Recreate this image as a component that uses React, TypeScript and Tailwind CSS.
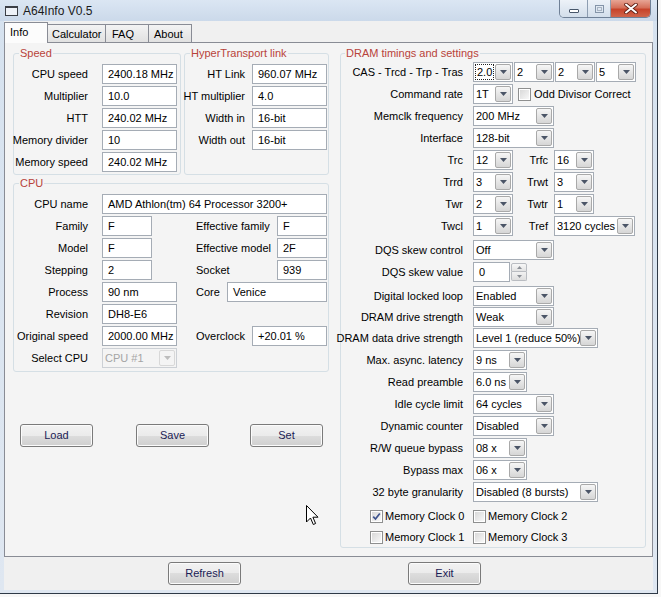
import React from "react";

const Arrow = ({ c = "#4b5567" }: { c?: string }) => (
  <svg width="7" height="4" viewBox="0 0 7 4">
    <path d="M0 0H7L3.5 4Z" fill={c} />
  </svg>
);

function TextBox({ value, className = "" }: { value: string; className?: string }) {
  return (
    <div
      className={`h-[20px] shrink-0 border border-[#a5acb5] bg-white pl-[5px] flex items-center whitespace-nowrap overflow-hidden text-black ${className}`}
    >
      {value}
    </div>
  );
}

function Combo({
  value,
  className = "",
  focus = false,
  disabled = false,
}: {
  value: string;
  className?: string;
  focus?: boolean;
  disabled?: boolean;
}) {
  return (
    <div
      className={`h-[20px] shrink-0 flex border ${
        disabled ? "border-[#ccd0d5] bg-[#f4f4f4] text-[#a5a5a5]" : "border-[#a5acb5] bg-white text-black"
      } ${className}`}
    >
      {focus ? (
        <div className="flex-1 min-w-0 m-[1px] border border-dotted border-[#222] flex items-center pl-[1px] overflow-hidden whitespace-nowrap">
          {value}
        </div>
      ) : (
        <div className="flex-1 min-w-0 flex items-center pl-[2px] overflow-hidden whitespace-nowrap">{value}</div>
      )}
      <div
        className={`w-[16px] shrink-0 my-[1px] mr-[1px] border rounded-[2px] flex items-center justify-center ${
          disabled
            ? "border-[#d8d8d8] bg-[#f4f4f4]"
            : "border-[#a9a9a9] bg-gradient-to-b from-[#f6f6f6] to-[#d6d6d6]"
        }`}
      >
        <Arrow c={disabled ? "#bdbdbd" : "#4b5567"} />
      </div>
    </div>
  );
}

function Check({ checked = false }: { checked?: boolean }) {
  return (
    <div className="w-[13px] h-[13px] shrink-0 border border-[#8e8f8f] bg-white p-[1px]">
      <div className="w-full h-full bg-gradient-to-br from-[#d9d9d9] to-[#f8f8f8] flex items-center justify-center">
        {checked && (
          <svg width="9" height="9" viewBox="0 0 9 9">
            <path d="M1.2 4.6 L3.5 7 L7.8 1.5" stroke="#3e538d" strokeWidth="1.7" fill="none" />
          </svg>
        )}
      </div>
    </div>
  );
}

function Btn({ label, className = "" }: { label: string; className?: string }) {
  return (
    <div
      className={`w-[73px] h-[23px] shrink-0 rounded-[3px] border border-[#7a7a7a] bg-[linear-gradient(#f2f2f2,#ebebeb_50%,#dddddd_50%,#cfcfcf)] shadow-[inset_0_0_0_1px_#fbfbfb] flex items-center justify-center text-[#1b1b55] ${className}`}
    >
      {label}
    </div>
  );
}

function SRow({ label, value }: { label: string; value: string }) {
  return (
    <div className="flex items-center h-[20px]">
      <div className="w-[74px] shrink-0 flex justify-end whitespace-nowrap">{label}</div>
      <TextBox className="ml-[14px] w-[75px]" value={value} />
    </div>
  );
}

function HRow({ label, value }: { label: string; value: string }) {
  return (
    <div className="flex items-center h-[20px]">
      <div className="w-[60px] shrink-0 flex justify-end whitespace-nowrap">{label}</div>
      <TextBox className="ml-[7px] w-[75px]" value={value} />
    </div>
  );
}

function CLabel({ label }: { label: string }) {
  return <div className="w-[74px] shrink-0 flex justify-end whitespace-nowrap">{label}</div>;
}

function DRow({
  label,
  children,
  className = "",
}: {
  label: string;
  children: React.ReactNode;
  className?: string;
}) {
  return (
    <div className={`flex items-center h-[20px] ${className}`}>
      <div className="w-[122px] shrink-0 flex justify-end whitespace-nowrap">{label}</div>
      <div className="ml-[10px] flex items-center">{children}</div>
    </div>
  );
}

function Pair({
  a,
  label,
  b,
  bw = "w-[40px]",
}: {
  a: string;
  label: string;
  b: string;
  bw?: string;
}) {
  return (
    <>
      <Combo value={a} className="w-[40px]" />
      <div className="w-[35px] shrink-0 flex justify-end whitespace-nowrap">{label}</div>
      <Combo value={b} className={`ml-[6px] ${bw}`} />
    </>
  );
}

const legend = "ml-[5px] px-[1px] text-[#b8433a] leading-[13px]";
const fs = "border border-[#d5dfe5] rounded-[3px]";

export default function App() {
  return (
    <div className="relative w-[661px] h-[597px] overflow-hidden bg-[#f7f7f7] font-['Liberation_Sans',Arial,sans-serif] text-[11px] leading-[13px] text-black">
      <div className="w-[658px] h-[594px] flex flex-col bg-gradient-to-b from-[#d6e2ef] to-[#dfe7f1] border-r border-b border-[#2e3946]">
        {/* Title bar */}
        <div className="h-[21px] shrink-0 flex items-start bg-gradient-to-b from-[#dbe6f3] to-[#cbd9ea]">
          <div className="ml-[5px] mt-[6px] w-[13px] h-[10px] border border-[#3b3f46] border-t-[2px] bg-[#eef2f8]" />
          <div className="ml-[5px] mt-[4px] text-[12px] leading-[14px] text-[#1a1a1a]">A64Info V0.5</div>
          <div className="ml-auto mr-[6px] flex h-[18px] rounded-b-[5px] border border-t-0 border-[#6f8096] overflow-hidden">
            <div className="w-[28px] h-full bg-gradient-to-b from-[#edf2f8] to-[#d3deeb] border-r border-[#8d9db1] flex items-center justify-center">
              <div className="mt-[5px] w-[10px] h-[4px] rounded-[1px] border border-[#47566a] bg-white" />
            </div>
            <div className="w-[23px] h-full bg-gradient-to-b from-[#edf2f8] to-[#d3deeb] border-r border-[#8d9db1] flex items-center justify-center">
              <div className="w-[9px] h-[8px] border border-[#8494a8] p-[1px]">
                <div className="w-full h-full border border-[#a8b4c3]" />
              </div>
            </div>
            <div className="w-[39px] h-full bg-[linear-gradient(#e7a595,#d5705a_45%,#c7432a_55%,#d0664c)] flex items-center justify-center">
              <svg width="14" height="11" viewBox="0 0 14 11">
                <path d="M2 1.5 L12 9.5 M12 1.5 L2 9.5" stroke="#5e1f14" strokeWidth="3.6" strokeLinecap="round" />
                <path d="M2 1.5 L12 9.5 M12 1.5 L2 9.5" stroke="#ffffff" strokeWidth="2" strokeLinecap="round" />
              </svg>
            </div>
          </div>
        </div>

        {/* Client area */}
        <div className="flex-1 mx-[4px] mb-[3px] bg-[#f0f0f0] flex flex-col">
          {/* Tabs */}
          <div className="h-[21px] shrink-0 flex items-end">
            <div className="relative z-10 -mb-[1px] w-[44px] h-[21px] bg-[#fcfcfc] border-l border-t border-r border-[#898c95] pl-[5px] pt-[3px]">
              Info
            </div>
            <div className="w-[58px] h-[18px] bg-gradient-to-b from-[#f3f3f3] to-[#e1e1e1] border-t border-r border-[#898c95] pl-[4px] pt-[3px]">
              Calculator
            </div>
            <div className="w-[43px] h-[18px] bg-gradient-to-b from-[#f3f3f3] to-[#e1e1e1] border-t border-r border-[#898c95] pl-[6px] pt-[3px]">
              FAQ
            </div>
            <div className="w-[43px] h-[18px] bg-gradient-to-b from-[#f3f3f3] to-[#e1e1e1] border-t border-r border-[#898c95] pl-[5px] pt-[3px]">
              About
            </div>
          </div>

          {/* Panel */}
          <div className="h-[515px] shrink-0 border border-[#898c95] bg-[#f4f4f4] flex pt-[4px] pl-[8px]">
            {/* Left column */}
            <div className="w-[316px] shrink-0 flex flex-col">
              <div className="flex gap-[3px]">
                <fieldset className={`w-[168px] pb-[2px] ${fs}`}>
                  <legend className={legend}>Speed</legend>
                  <div className="flex flex-col gap-[2px] pt-[4px]">
                    <SRow label="CPU speed" value="2400.18 MHz" />
                    <SRow label="Multiplier" value="10.0" />
                    <SRow label="HTT" value="240.02 MHz" />
                    <SRow label="Memory divider" value="10" />
                    <SRow label="Memory speed" value="240.02 MHz" />
                  </div>
                </fieldset>
                <fieldset className={`w-[145px] pb-[2px] ${fs}`}>
                  <legend className={legend}>HyperTransport link</legend>
                  <div className="flex flex-col gap-[2px] pt-[4px]">
                    <HRow label="HT Link" value="960.07 MHz" />
                    <HRow label="HT multiplier" value="4.0" />
                    <HRow label="Width in" value="16-bit" />
                    <HRow label="Width out" value="16-bit" />
                  </div>
                </fieldset>
              </div>

              <fieldset className={`mt-[2px] w-[316px] pb-[3px] ${fs}`}>
                <legend className={legend}>CPU</legend>
                <div className="flex flex-col gap-[2px] pt-[4px] pr-[1px]">
                  <div className="flex items-center h-[20px]">
                    <CLabel label="CPU name" />
                    <TextBox className="ml-[14px] w-[225px]" value="AMD Athlon(tm) 64 Processor 3200+" />
                  </div>
                  <div className="flex items-center h-[20px]">
                    <CLabel label="Family" />
                    <TextBox className="ml-[14px] w-[50px]" value="F" />
                    <div className="ml-[44px] flex-1 whitespace-nowrap">Effective family</div>
                    <TextBox className="w-[50px]" value="F" />
                  </div>
                  <div className="flex items-center h-[20px]">
                    <CLabel label="Model" />
                    <TextBox className="ml-[14px] w-[50px]" value="F" />
                    <div className="ml-[44px] flex-1 whitespace-nowrap">Effective model</div>
                    <TextBox className="w-[50px]" value="2F" />
                  </div>
                  <div className="flex items-center h-[20px]">
                    <CLabel label="Stepping" />
                    <TextBox className="ml-[14px] w-[50px]" value="2" />
                    <div className="ml-[44px] flex-1 whitespace-nowrap">Socket</div>
                    <TextBox className="w-[50px]" value="939" />
                  </div>
                  <div className="flex items-center h-[20px]">
                    <CLabel label="Process" />
                    <TextBox className="ml-[14px] w-[75px]" value="90 nm" />
                    <div className="ml-[19px] flex-1 whitespace-nowrap">Core</div>
                    <TextBox className="w-[100px]" value="Venice" />
                  </div>
                  <div className="flex items-center h-[20px]">
                    <CLabel label="Revision" />
                    <TextBox className="ml-[14px] w-[75px]" value="DH8-E6" />
                  </div>
                  <div className="flex items-center h-[20px]">
                    <CLabel label="Original speed" />
                    <TextBox className="ml-[14px] w-[75px]" value="2000.00 MHz" />
                    <div className="ml-[19px] flex-1 whitespace-nowrap">Overclock</div>
                    <TextBox className="w-[75px]" value="+20.01 %" />
                  </div>
                  <div className="flex items-center h-[20px]">
                    <CLabel label="Select CPU" />
                    <Combo className="ml-[14px] w-[75px]" value="CPU #1" disabled />
                  </div>
                </div>
              </fieldset>

              <div className="mt-[52px] flex">
                <Btn label="Load" className="ml-[7px]" />
                <Btn label="Save" className="ml-[43px]" />
                <Btn label="Set" className="ml-[41px]" />
              </div>
            </div>

            {/* DRAM */}
            <fieldset className={`ml-[11px] w-[306px] h-[501px] pb-[1px] ${fs}`}>
              <legend className="ml-[4px] px-[1px] text-[#b8433a] leading-[13px]">DRAM timings and settings</legend>
              <div className="flex flex-col pt-[2px]">
                <DRow label="CAS - Trcd - Trp - Tras">
                  <div className="flex gap-[1px]">
                    <Combo value="2.0" className="w-[40px]" focus />
                    <Combo value="2" className="w-[40px]" />
                    <Combo value="2" className="w-[40px]" />
                    <Combo value="5" className="w-[40px]" />
                  </div>
                </DRow>
                <DRow label="Command rate" className="mt-[2px]">
                  <Combo value="1T" className="w-[40px]" />
                  <div className="ml-[5px]">
                    <Check />
                  </div>
                  <div className="ml-[3px] whitespace-nowrap">Odd Divisor Correct</div>
                </DRow>
                <DRow label="Memclk frequency" className="mt-[2px]">
                  <Combo value="200 MHz" className="w-[81px]" />
                </DRow>
                <DRow label="Interface" className="mt-[2px]">
                  <Combo value="128-bit" className="w-[81px]" />
                </DRow>
                <DRow label="Trc" className="mt-[2px]">
                  <Pair a="12" label="Trfc" b="16" />
                </DRow>
                <DRow label="Trrd" className="mt-[2px]">
                  <Pair a="3" label="Trwt" b="3" />
                </DRow>
                <DRow label="Twr" className="mt-[2px]">
                  <Pair a="2" label="Twtr" b="1" />
                </DRow>
                <DRow label="Twcl" className="mt-[2px]">
                  <Pair a="1" label="Tref" b="3120 cycles" bw="w-[81px]" />
                </DRow>
                <DRow label="DQS skew control" className="mt-[4px]">
                  <Combo value="Off" className="w-[81px]" />
                </DRow>
                <DRow label="DQS skew value" className="mt-[2px]">
                  <TextBox value="0" className="w-[37px]" />
                  <div className="w-[17px] h-[20px] flex flex-col justify-center gap-0 pl-[1px]">
                    <div className="h-[9px] border border-[#b9bcc1] rounded-t-[2px] bg-gradient-to-b from-[#f7f7f7] to-[#e3e3e3] flex items-center justify-center">
                      <svg width="5" height="3" viewBox="0 0 5 3">
                        <path d="M0 3H5L2.5 0Z" fill="#8b8f96" />
                      </svg>
                    </div>
                    <div className="h-[9px] border border-t-0 border-[#b9bcc1] rounded-b-[2px] bg-gradient-to-b from-[#f2f2f2] to-[#dedede] flex items-center justify-center">
                      <svg width="5" height="3" viewBox="0 0 5 3">
                        <path d="M0 0H5L2.5 3Z" fill="#8b8f96" />
                      </svg>
                    </div>
                  </div>
                </DRow>
                <DRow label="Digital locked loop" className="mt-[4px]">
                  <Combo value="Enabled" className="w-[81px]" />
                </DRow>
                <DRow label="DRAM drive strength" className="mt-[1px]">
                  <Combo value="Weak" className="w-[81px]" />
                </DRow>
                <DRow label="DRAM data drive strength" className="mt-[1px]">
                  <Combo value="Level 1 (reduce 50%)" className="w-[125px]" />
                </DRow>
                <DRow label="Max. async. latency" className="mt-[2px]">
                  <Combo value="9 ns" className="w-[54px]" />
                </DRow>
                <DRow label="Read preamble" className="mt-[2px]">
                  <Combo value="6.0 ns" className="w-[54px]" />
                </DRow>
                <DRow label="Idle cycle limit" className="mt-[2px]">
                  <Combo value="64 cycles" className="w-[81px]" />
                </DRow>
                <DRow label="Dynamic counter" className="mt-[2px]">
                  <Combo value="Disabled" className="w-[81px]" />
                </DRow>
                <DRow label="R/W queue bypass" className="mt-[2px]">
                  <Combo value="08 x" className="w-[54px]" />
                </DRow>
                <DRow label="Bypass max" className="mt-[2px]">
                  <Combo value="06 x" className="w-[54px]" />
                </DRow>
                <DRow label="32 byte granularity" className="mt-[2px]">
                  <Combo value="Disabled (8 bursts)" className="w-[125px]" />
                </DRow>

                <div className="mt-[6px] h-[16px] flex items-center">
                  <div className="ml-[29px] w-[103px] flex items-center gap-[2px]">
                    <Check checked />
                    <span className="whitespace-nowrap">Memory Clock 0</span>
                  </div>
                  <div className="flex items-center gap-[2px]">
                    <Check />
                    <span className="whitespace-nowrap">Memory Clock 2</span>
                  </div>
                </div>
                <div className="mt-[5px] h-[16px] flex items-center">
                  <div className="ml-[29px] w-[103px] flex items-center gap-[2px]">
                    <Check />
                    <span className="whitespace-nowrap">Memory Clock 1</span>
                  </div>
                  <div className="flex items-center gap-[2px]">
                    <Check />
                    <span className="whitespace-nowrap">Memory Clock 3</span>
                  </div>
                </div>
              </div>
            </fieldset>
          </div>

          {/* Bottom buttons */}
          <div className="mt-[5px] flex">
            <Btn label="Refresh" className="ml-[164px]" />
            <Btn label="Exit" className="ml-[167px]" />
          </div>
        </div>
      </div>

      {/* Mouse cursor */}
      <svg className="absolute left-[306px] top-[505px]" width="13" height="21" viewBox="0 0 13 21">
        <path
          d="M0.5 0.5 L0.5 17 L4.5 13 L7.3 19.5 L9.6 18.5 L6.9 12.2 L12 12.2 Z"
          fill="#ffffff"
          stroke="#000000"
          strokeWidth="1"
          strokeLinejoin="miter"
        />
      </svg>
    </div>
  );
}
